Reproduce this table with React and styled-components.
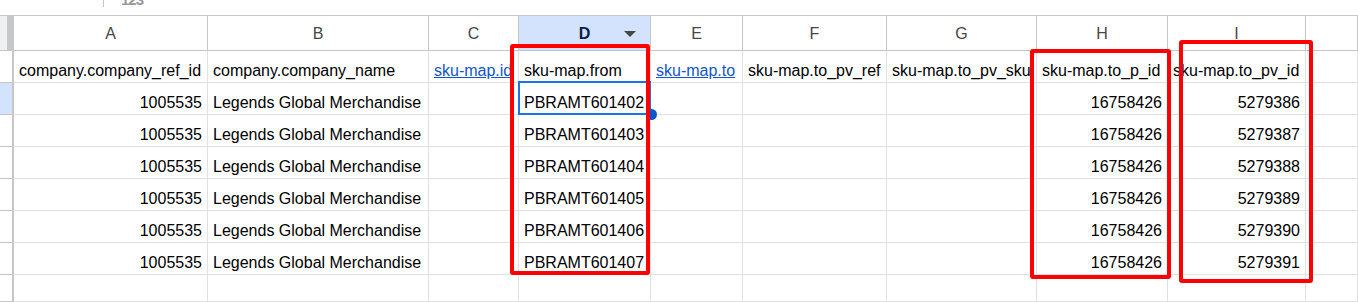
import styled, { createGlobalStyle, css } from "styled-components";

const GlobalStyle = createGlobalStyle`
  html, body {
    margin: 0;
    padding: 0;
    background: #fff;
    overflow: hidden;
  }
  body {
    font-family: "Liberation Sans", Arial, sans-serif;
  }
`;

const COLUMNS = [
  { key: "A", width: 194 },
  { key: "B", width: 221 },
  { key: "C", width: 90 },
  { key: "D", width: 132, active: true },
  { key: "E", width: 92 },
  { key: "F", width: 144 },
  { key: "G", width: 150 },
  { key: "H", width: 131 },
  { key: "I", width: 138 },
  { key: "", width: null },
];

const HEADINGS = [
  { text: "company.company_ref_id" },
  { text: "company.company_name" },
  { text: "sku-map.id", link: true },
  { text: "sku-map.from" },
  { text: "sku-map.to", link: true },
  { text: "sku-map.to_pv_ref" },
  { text: "sku-map.to_pv_sku" },
  { text: "sku-map.to_p_id" },
  { text: "sku-map.to_pv_id" },
  { text: "" },
];

const ROWS = [0, 1, 2, 3, 4, 5].map((i) => [
  { text: "1005535", right: true },
  { text: "Legends Global Merchandise" },
  { text: "" },
  { text: `PBRAMT60140${2 + i}`, selected: i === 0 },
  { text: "" },
  { text: "" },
  { text: "" },
  { text: "16758426", right: true },
  { text: String(5279386 + i), right: true },
  { text: "" },
]);

// annotation boxes drawn over the sheet
const MARKS = [
  { left: 510, top: 44, width: 140, height: 231 },
  { left: 1030, top: 49, width: 141, height: 230 },
  { left: 1179, top: 40, width: 134, height: 243 },
];

const Page = styled.div`
  position: relative;
  width: 1358px;
  height: 302px;
  overflow: hidden;
`;

const Toolbar = styled.div`
  display: flex;
  align-items: flex-start;
  height: 15px;
  padding-left: 103px;
  border-bottom: 1px solid #c4c7c5;
  overflow: hidden;
`;

const Separator = styled.div`
  width: 1px;
  height: 7px;
  background: #c7c7c7;
`;

const ToolGlyph = styled.span`
  margin: -9px 0 0 17px;
  font-size: 15px;
  font-weight: bold;
  color: #9a9a9a;
  letter-spacing: -1px;
`;

const Sheet = styled.div`
  display: grid;
  grid-template-columns: 14px ${COLUMNS.map((c) => (c.width ? `${c.width}px` : "1fr")).join(" ")};
  grid-template-rows: 35px repeat(7, 32px) 1fr;
  height: 286px;
  font-size: 16px;
  color: #000;
`;

const Corner = styled.div`
  box-sizing: border-box;
  background: linear-gradient(to right, #eef0f1 7px, #c7c7c7 7px);
  border-bottom: 1px solid #c4c7c5;
`;

const ColHeader = styled.div`
  box-sizing: border-box;
  display: flex;
  align-items: center;
  justify-content: center;
  padding-top: 1px;
  position: relative;
  border-right: 1px solid #c4c7c5;
  border-bottom: 1px solid #c4c7c5;
  color: #444746;
  background: #fff;
  ${(p) =>
    p.$active &&
    css`
      background: #d3e3fd;
      color: #041e49;
      font-weight: bold;
    `}
`;

const DropArrow = styled.svg`
  position: absolute;
  right: 14px;
  top: 15px;
`;

const RowHeader = styled.div`
  box-sizing: border-box;
  border-right: 2px solid #c4c7c5;
  border-bottom: 1px solid #c4c7c5;
  background: ${(p) => (p.$active ? "#d3e3fd" : "#fff")};
`;

const Cell = styled.div`
  box-sizing: border-box;
  position: relative;
  display: flex;
  align-items: flex-end;
  justify-content: ${(p) => (p.$right ? "flex-end" : "flex-start")};
  padding: 0 5px 2px 5px;
  border-right: 1px solid #e1e1e1;
  border-bottom: 1px solid #e1e1e1;
  white-space: nowrap;
  overflow: hidden;
  line-height: 18px;
  ${(p) =>
    p.$selected &&
    css`
      overflow: visible;
      z-index: 2;
      &::after {
        content: "";
        position: absolute;
        top: -2px;
        left: -1px;
        right: -1px;
        bottom: -1px;
        border: 2px solid #1a73e8;
      }
      &::before {
        content: "";
        position: absolute;
        right: -7px;
        bottom: -6px;
        width: 11px;
        height: 11px;
        border-radius: 50%;
        background: #0b57d0;
        z-index: 1;
      }
    `}
`;

const LinkText = styled.span`
  color: #1155cc;
  text-decoration: underline;
`;

const Mark = styled.div`
  position: absolute;
  box-sizing: border-box;
  border: 4px solid #ff0000;
  border-radius: 3px;
  pointer-events: none;
  z-index: 5;
`;

const renderCell = (cell, key) => (
  <Cell key={key} $right={cell.right} $selected={cell.selected}>
    {cell.link ? <LinkText>{cell.text}</LinkText> : cell.text}
  </Cell>
);

export default function App() {
  return (
    <Page>
      <GlobalStyle />
      <Toolbar>
        <Separator />
        <ToolGlyph>123</ToolGlyph>
      </Toolbar>
      <Sheet>
        <Corner />
        {COLUMNS.map((c, i) => (
          <ColHeader key={`col${i}`} $active={c.active}>
            {c.key}
            {c.active && (
              <DropArrow width="12" height="6" viewBox="0 0 12 6">
                <path d="M0 0h12L6 6z" fill="#444746" />
              </DropArrow>
            )}
          </ColHeader>
        ))}

        <RowHeader />
        {HEADINGS.map((h, i) => renderCell(h, `h${i}`))}

        {ROWS.map((row, r) => [
          <RowHeader key={`rh${r}`} $active={r === 0} />,
          ...row.map((cell, i) => renderCell(cell, `r${r}c${i}`)),
        ])}

        <RowHeader />
        {COLUMNS.map((c, i) => (
          <Cell key={`last${i}`} />
        ))}
      </Sheet>
      {MARKS.map((m, i) => (
        <Mark
          key={i}
          style={{ left: m.left, top: m.top, width: m.width, height: m.height }}
        />
      ))}
    </Page>
  );
}
